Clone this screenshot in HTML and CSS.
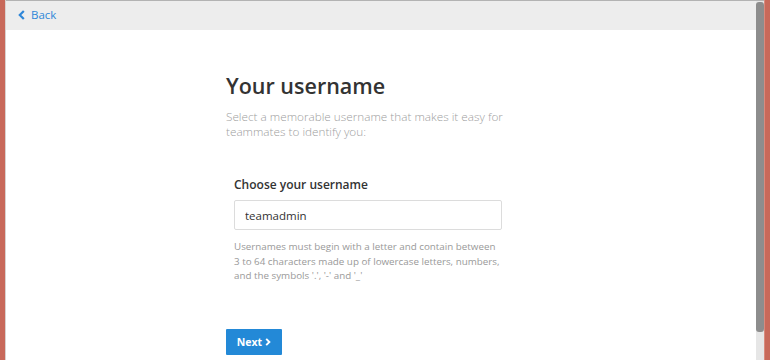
FILE: index.html
```html
<!DOCTYPE html>
<html lang="en">
<head>
    <meta charset="UTF-8">
    <meta name="viewport" content="width=device-width, initial-scale=1.0">
    <title>Your username</title>
    <link rel="stylesheet" href="styles.css">
</head>
<body>
    <div class="frame">
        <div class="edge edge-left"></div>
        <div class="page">
            <div class="topbar">
                <a href="#" class="back">
                    <svg class="back-icon" width="7" height="10" viewBox="0 0 7 10">
                        <path d="M5.8 1 L1.8 5 L5.8 9" fill="none" stroke="currentColor" stroke-width="2.2"/>
                    </svg>
                    Back
                </a>
            </div>
            <div class="content">
                <h1>Your username</h1>
                <p class="intro">Select a memorable username that makes it easy for teammates to identify you:</p>

                <div class="field">
                    <label for="username">Choose your username</label>
                    <input type="text" id="username" value="teamadmin">
                    <p class="help">Usernames must begin with a letter and contain between 3 to 64 characters made up of lowercase letters, numbers, and the symbols '.', '-' and '_'</p>
                </div>

                <button class="next-btn">Next
                    <svg class="next-icon" width="6" height="8" viewBox="0 0 6 8">
                        <path d="M1.2 0.8 L4.4 4 L1.2 7.2" fill="none" stroke="currentColor" stroke-width="1.9"/>
                    </svg>
                </button>
            </div>
        </div>
        <div class="scrollbar"><div class="thumb"></div></div>
        <div class="edge edge-right"></div>
    </div>
</body>
</html>
```

FILE: styles.css
```css
body {
    margin: 0;
    font-family: 'Open Sans', 'Liberation Sans', sans-serif;
    background: #c8695a;
}

.frame {
    display: flex;
    height: 360px;
    overflow: hidden;
}

.edge {
    background: #c8695a;
}

.edge-left {
    width: 5px;
    border-right: 1px solid #d9d2d0;
}

.edge-right {
    width: 5px;
    border-left: 1px solid #d98a7d;
}

.page {
    flex: 1;
    background: #fff;
    border-top: 1px solid #b3b3b3;
}

.scrollbar {
    width: 8px;
    background: #e6e6e6;
    border-top: 1px solid #b3b3b3;
    padding-top: 1px;
}

.thumb {
    height: 330px;
    background: #8d8d8d;
    border-radius: 3px;
}

.topbar {
    height: 29px;
    background: #ededed;
    display: flex;
    align-items: center;
    padding-left: 12px;
    padding-bottom: 2px;
    box-sizing: border-box;
}

.back {
    color: #2f87d8;
    text-decoration: none;
    font-size: 11.5px;
    display: flex;
    align-items: center;
    gap: 6px;
}

.content {
    padding-left: 220px;
    padding-top: 41px;
}

h1 {
    margin: 0;
    font-size: 21.5px;
    line-height: 30px;
    font-weight: 600;
    color: #333;
}

.intro {
    margin: 8px 0 0;
    width: 290px;
    font-size: 11.75px;
    line-height: 15px;
    font-weight: 300;
    color: #a0a0a0;
}

.field {
    margin: 38px 0 0 8px;
    width: 268px;
}

label {
    display: block;
    font-size: 12px;
    line-height: 16px;
    font-weight: 600;
    color: #333;
}

input[type="text"] {
    display: block;
    box-sizing: border-box;
    width: 100%;
    height: 30px;
    margin-top: 7px;
    padding: 0 10px;
    border: 1px solid #dcdcdc;
    border-radius: 2px;
    font-family: inherit;
    font-size: 11.5px;
    color: #333;
}

.help {
    margin: 10px 0 0;
    font-size: 9.8px;
    line-height: 14.5px;
    color: #999;
}

.next-btn {
    margin-top: 45px;
    width: 56px;
    height: 26px;
    border: none;
    border-radius: 1px;
    background: #2389d7;
    color: #fff;
    font-family: inherit;
    font-size: 10.5px;
    font-weight: 700;
    padding: 0;
    display: flex;
    align-items: center;
    justify-content: center;
    gap: 3px;
}
```
